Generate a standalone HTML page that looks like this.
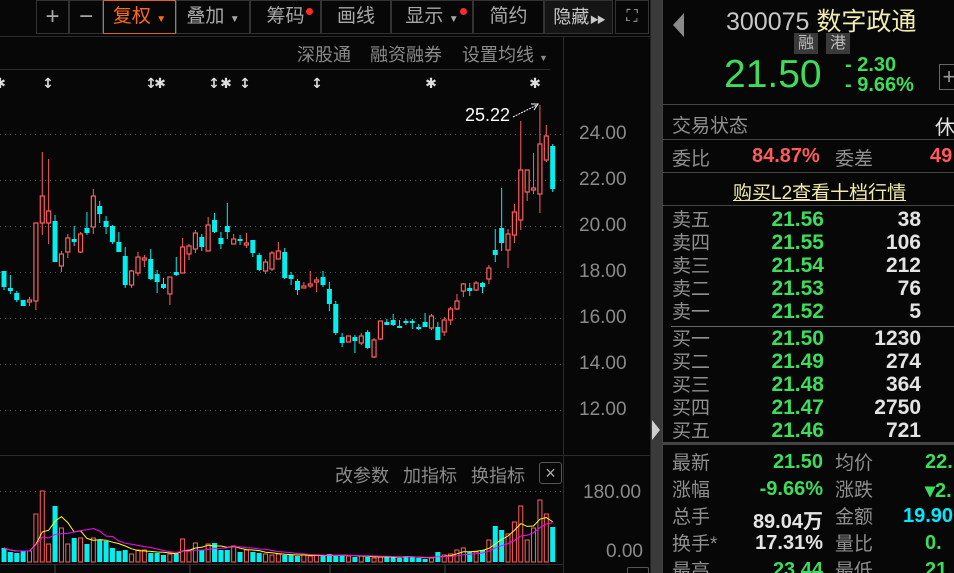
<!DOCTYPE html>
<html style="width:954px;height:573px;overflow:hidden"><head><meta charset="utf-8"><style>
*{margin:0;padding:0;box-sizing:border-box}
body{width:954px;height:573px;background:#070707;overflow:hidden;position:relative;font-family:"Liberation Sans","Noto Sans CJK SC",sans-serif;color:#9a9a9a}
.a{position:absolute;white-space:nowrap}
.btn{position:absolute;top:0;height:34px;border:1px solid #333;color:#a8a8a8;font-size:19px;line-height:32px;text-align:center;white-space:nowrap;overflow:hidden}
.g{color:#3ddc5a}.w{color:#e4e4e4}.r{color:#ff5a5a}.c{color:#00eaff}
.lbl{font-size:19px;color:#8f8f8f;margin-top:-3px}
.num{font-size:20px;font-weight:bold}
.hl{position:absolute;height:1px;background:#333}
.dot{position:absolute;width:4px;height:4px;border-radius:50%;background:#ff2b2b;top:8px}
</style></head><body>
<div class="btn" style="left:36px;width:33px;font-size:24px">+</div>
<div class="btn" style="left:69px;width:34px;font-size:24px">−</div>
<div class="btn" style="left:103px;width:73px;border-color:#e2621b;color:#ff6a1a">复权 <span style="font-size:10px">▼</span></div>
<div class="btn" style="left:176px;width:74px">叠加 <span style="font-size:10px">▼</span></div>
<div class="btn" style="left:250px;width:71px">筹码</div><div class="dot" style="left:306px;width:7px;height:7px;top:8px"></div>
<div class="btn" style="left:321px;width:70px">画线</div>
<div class="btn" style="left:391px;width:82px">显示 <span style="font-size:10px">▼</span></div><div class="dot" style="left:460px;width:7px;height:7px;top:8px"></div>
<div class="btn" style="left:473px;width:71px">简约</div>
<div class="btn" style="left:544px;width:69px;background:#151515;color:#c8c8c8;font-size:18px">隐藏<span style="font-size:9px;letter-spacing:-2px"> ▶▶</span></div>
<div class="btn" style="left:615px;width:34px;font-size:16px">⛶</div>
<div class="hl" style="left:0;top:36px;width:650px;background:#2a2a2a"></div>
<div class="a" style="left:297px;top:41px;font-size:18px;color:#8a8a8a">深股通</div>
<div class="a" style="left:370px;top:41px;font-size:18px;color:#8a8a8a">融资融券</div>
<div class="a" style="left:462px;top:41px;font-size:18px;color:#8a8a8a">设置均线 <span style="font-size:9px">▼</span></div>
<div class="hl" style="left:0;top:69px;width:550px;background:#2a2a2a"></div>
<div style="position:absolute;left:563px;top:37px;width:1px;height:536px;background:#2c2c2c"></div>
<div style="position:absolute;left:650px;top:0;width:12px;height:573px;background:#3a3a3a;border-left:1px solid #222"></div>
<div class="a" style="left:652px;top:420px;width:0;height:0;border-top:10px solid transparent;border-bottom:10px solid transparent;border-left:8px solid #cfcfcf"></div>
<svg width="650" height="573" style="position:absolute;left:0;top:0" id="ch"></svg>
<div class="a" style="left:465px;top:105px;font-size:18px;color:#fff">25.22</div>
<div class="a" style="left:579px;top:123px;font-size:19px;color:#8a8a8a">24.00</div>
<div class="a" style="left:579px;top:169px;font-size:19px;color:#8a8a8a">22.00</div>
<div class="a" style="left:579px;top:215px;font-size:19px;color:#8a8a8a">20.00</div>
<div class="a" style="left:579px;top:261px;font-size:19px;color:#8a8a8a">18.00</div>
<div class="a" style="left:579px;top:307px;font-size:19px;color:#8a8a8a">16.00</div>
<div class="a" style="left:579px;top:353px;font-size:19px;color:#8a8a8a">14.00</div>
<div class="a" style="left:579px;top:399px;font-size:19px;color:#8a8a8a">12.00</div>
<div class="hl" style="left:0;top:455px;width:650px;background:#2a2a2a"></div>
<div class="a" style="left:335px;top:462px;font-size:18px;color:#8a8a8a">改参数</div>
<div class="a" style="left:403px;top:462px;font-size:18px;color:#8a8a8a">加指标</div>
<div class="a" style="left:471px;top:462px;font-size:18px;color:#8a8a8a">换指标</div>
<div class="a" style="left:539px;top:462px;width:23px;height:22px;border:1px solid #555;border-radius:3px;color:#aaa;font-size:18px;line-height:20px;text-align:center">×</div>
<div class="a" style="left:583px;top:482px;font-size:19px;color:#8a8a8a">180.00</div>
<div class="a" style="left:606px;top:541px;font-size:19px;color:#8a8a8a">0.00</div>
<div class="a" style="left:627px;top:567px;width:22px;height:6px;border:1px solid #555;border-bottom:none;border-radius:2px 2px 0 0"></div>
<div style="position:absolute;left:662px;top:0;width:292px;height:573px;border-left:1px solid #444"></div>
<div class="a" style="left:673px;top:13px;width:0;height:0;border-top:12px solid transparent;border-bottom:12px solid transparent;border-right:11px solid #8a8a8a"></div>
<div class="a" style="left:726px;top:2px;font-size:25px;color:#c8c8c8">300075 <span style="color:#f2ecb0">数字政通</span></div>
<div class="a" style="left:794px;top:33px;width:24px;height:21px;background:#3a3a3a;color:#bbb;font-size:16px;text-align:center;line-height:21px">融</div>
<div class="a" style="left:826px;top:33px;width:24px;height:21px;background:#3a3a3a;color:#bbb;font-size:16px;text-align:center;line-height:21px">港</div>
<div class="a g" style="left:724px;top:53px;font-size:39px">21.50</div>
<div class="a g" style="left:845px;top:55px;font-size:20px;font-weight:bold;line-height:20px">-&nbsp;2.30<br>-&nbsp;9.66%</div>
<div class="a" style="left:939px;top:64px;width:20px;height:26px;border:1px solid #666;color:#999;font-size:22px;line-height:24px;text-align:center">+</div>
<div class="hl" style="left:663px;top:104px;width:291px;background:#444"></div>
<div class="a lbl" style="left:672px;top:114px">交易状态</div>
<div class="a w" style="left:935px;top:111px;font-size:20px">休</div>
<div class="hl" style="left:663px;top:139px;width:291px;background:#444"></div>
<div class="a lbl" style="left:672px;top:147px">委比</div>
<div class="a r num" style="left:752px;top:145px">84.87%</div>
<div class="a lbl" style="left:835px;top:147px">委差</div>
<div class="a r num" style="left:930px;top:145px">49</div>
<div class="hl" style="left:663px;top:172px;width:291px;background:#444"></div>
<div class="a" style="left:733px;top:178px;font-size:19px;color:#f2eaa8;text-decoration:underline">购买L2查看十档行情</div>
<div class="hl" style="left:663px;top:205px;width:291px;background:#444"></div>
<div id="ob"></div>
<div class="hl" style="left:671px;top:326px;width:283px;background:#666"></div>
<div class="hl" style="left:663px;top:442px;width:291px;height:3px;background:#444"></div>
<div id="st"></div>
<script>
var ob=[["卖五","21.56","38"],["卖四","21.55","106"],["卖三","21.54","212"],["卖二","21.53","76"],["卖一","21.52","5"],["买一","21.50","1230"],["买二","21.49","274"],["买三","21.48","364"],["买四","21.47","2750"],["买五","21.46","721"]];
var ys=[208,231,254,277,300,327,350,373,396,419],h="";
ob.forEach(function(r,i){h+='<div class="a lbl" style="left:672px;top:'+ys[i]+'px">'+r[0]+'</div><div class="a g num" style="right:130px;top:'+ys[i]+'px;font-size:21px">'+r[1]+'</div><div class="a w num" style="right:33px;top:'+ys[i]+'px;font-size:21px">'+r[2]+'</div>';});
document.getElementById("ob").innerHTML=h;
var st=[["最新","21.50","g","均价","22.","g"],["涨幅","-9.66%","g","涨跌","▾2.","g"],["总手","89.04万","w","金额","19.90","c"],["换手*","17.31%","w","量比","0.","g"],["最高","23.44","g","最低","21.","g"]];
h="";st.forEach(function(r,i){var y=451+i*27;h+='<div class="a lbl" style="left:672px;top:'+y+'px">'+r[0]+'</div><div class="a num '+r[2]+'" style="right:131px;top:'+y+'px">'+r[1]+'</div><div class="a lbl" style="left:835px;top:'+y+'px">'+r[3]+'</div><div class="a num '+r[5]+'" style="left:'+(r[4].length>3?903:925)+'px;top:'+y+'px">'+r[4]+'</div>';});
document.getElementById("st").innerHTML=h;
var C=[[271,287,271,290,0],[288,291,275,294,0],[293,300,291,302,0],[300,306,300,306,0],[300,302,297,306,1],[223,301,223,310,1],[196,223,152,235,1],[211,223,159,244,1],[221,262,215,262,0],[254,266,251,272,1],[238,252,234,258,1],[239,242,226,246,0],[234,252,232,253,1],[228,233,212,235,0],[196,227,189,234,1],[206,214,201,223,0],[221,227,216,234,0],[226,242,225,244,0],[242,252,232,252,0],[256,285,247,288,0],[271,285,270,288,1],[257,273,252,276,1],[258,260,255,267,1],[259,279,249,280,0],[274,282,270,293,0],[284,288,278,289,0],[277,294,277,305,1],[272,275,257,276,0],[247,273,238,273,1],[246,254,244,260,1],[233,249,230,253,1],[237,247,234,251,0],[225,251,217,251,1],[220,232,213,233,0],[238,244,232,249,0],[226,232,203,239,0],[239,244,234,244,1],[239,241,235,245,0],[243,245,233,248,1],[240,253,240,257,0],[255,270,253,271,0],[262,271,259,274,1],[253,269,251,271,1],[251,259,242,259,1],[252,278,248,279,0],[275,279,272,285,0],[281,290,279,295,0],[286,288,282,288,1],[284,286,271,288,1],[280,282,277,292,1],[277,285,271,287,0],[289,304,282,311,0],[304,333,301,335,0],[337,343,333,347,0],[336,342,336,342,1],[337,341,335,353,0],[336,343,333,345,1],[332,348,330,349,0],[340,357,338,358,1],[321,339,321,340,1],[322,325,319,325,0],[320,325,314,326,0],[326,328,320,328,0],[321,323,319,325,0],[321,323,319,329,0],[327,329,324,330,0],[322,327,313,327,0],[316,328,314,330,1],[327,340,322,340,0],[320,332,317,336,1],[309,320,307,325,1],[301,309,294,310,1],[284,291,283,297,1],[288,291,283,296,0],[283,290,281,291,1],[283,287,282,293,0],[268,279,265,284,1],[250,255,229,262,0],[228,243,188,251,0],[234,250,229,268,1],[212,235,204,243,1],[170,220,121,230,1],[170,192,170,201,1],[188,190,153,194,1],[144,194,105,213,1],[136,160,125,162,1],[146,189,144,192,0]];
var V=[14,10,9,11,11,48,71,18,56,34,18,24,24,18,24,22,21,14,11,12,8,12,12,9,9,7,8,8,23,12,19,12,18,19,12,12,16,10,12,10,9,8,7,8,7,7,6,7,6,7,6,8,6,7,6,5,6,5,4,5,6,5,4,6,5,4,3,4,10,7,8,12,14,10,10,12,22,36,32,28,40,56,22,34,62,48,35];
var s='',CY='#00f0f0',RD='#ff5e5e';
[134,180,226,272,318,364,410].forEach(function(y){s+='<line x1="0" y1="'+y+'.5" x2="563" y2="'+y+'.5" stroke="#555" stroke-dasharray="1,4"/>';});
s+='<line x1="0" y1="491.5" x2="563" y2="491.5" stroke="#555" stroke-dasharray="1,4"/>';
C.forEach(function(c,i){var x=4+i*6.38,col=c[4]?RD:CY;
s+='<line x1="'+x+'" y1="'+c[2]+'" x2="'+x+'" y2="'+c[3]+'" stroke="'+col+'" stroke-width="1"/>';
var bh=Math.max(c[1]-c[0],1.5);
if(c[4])s+='<rect x="'+(x-2)+'" y="'+c[0]+'" width="4" height="'+bh+'" fill="#070707" stroke="'+col+'" stroke-width="1.2"/>';
else s+='<rect x="'+(x-2.5)+'" y="'+c[0]+'" width="5" height="'+bh+'" fill="'+col+'"/>';
var v=V[i];
if(c[4])s+='<rect x="'+(x-2)+'" y="'+(562-v)+'" width="4" height="'+v+'" fill="none" stroke="'+col+'" stroke-width="1"/>';
else s+='<rect x="'+(x-2.5)+'" y="'+(562-v)+'" width="5" height="'+v+'" fill="'+col+'"/>';});
function ma(n,col){var p=[];for(var i=0;i<V.length;i++){var a=0,k=0;for(var j=Math.max(0,i-n+1);j<=i;j++){a+=V[j];k++;}p.push((4+i*6.38).toFixed(1)+','+(562-a/k).toFixed(1));}s+='<polyline points="'+p.join(' ')+'" fill="none" stroke="'+col+'" stroke-width="1"/>';}
ma(5,'#ffff00');ma(10,'#ff00ff');
s+='<line x1="513" y1="117" x2="537" y2="105" stroke="#fff" stroke-dasharray="2,1"/><path d="M531 104 L538 104 L534 110" fill="none" stroke="#fff"/>';
[55,190,330,445].forEach(function(t){s+='<line x1="'+t+'" y1="565" x2="'+t+'" y2="573" stroke="#444"/>';});
s+='<line x1="0" y1="564.5" x2="563" y2="564.5" stroke="#2c2c2c"/>';
var mk=[[0,"✱"],[48,"↕"],[151,"↕"],[160,"✱"],[214,"↕"],[226,"✱"],[245,"↕"],[317,"↕"],[431,"✱"],[535,"✱"]];
mk.forEach(function(m){s+='<text x="'+m[0]+'" y="88" fill="#ddd" font-size="14" font-weight="bold" text-anchor="middle" font-family="DejaVu Sans">'+m[1]+'</text>';});
document.getElementById("ch").innerHTML=s;
</script>
</body></html>
